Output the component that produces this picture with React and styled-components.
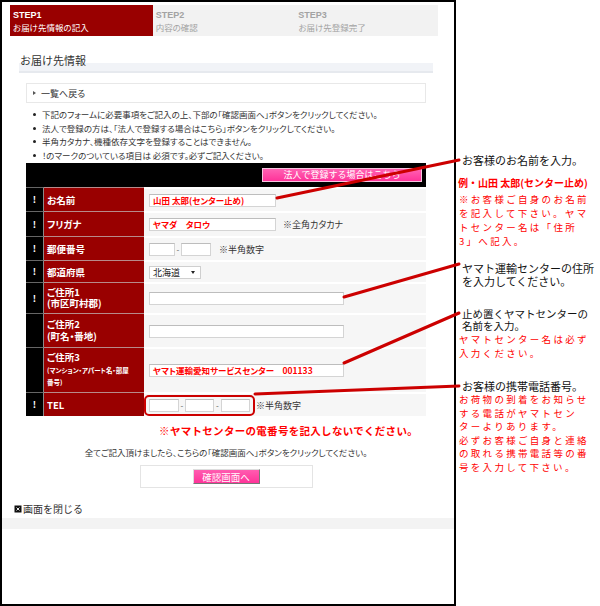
import React from 'react';
import styled, { createGlobalStyle } from 'styled-components';

const GlobalStyle = createGlobalStyle`
  html, body {
    margin: 0;
    padding: 0;
    background: #fff;
  }
  body {
    font-family: "Noto Sans CJK JP", "Liberation Sans", sans-serif;
    font-size: 8.5px;
    color: #222;
    font-feature-settings: "palt";
  }
  * {
    box-sizing: border-box;
  }
`;

const Page = styled.div`
  position: relative;
  display: flex;
  align-items: flex-start;
  width: 600px;
  height: 606px;
  overflow: hidden;
`;

const Frame = styled.div`
  width: 456px;
  height: 606px;
  border: 2px solid #000;
  padding-top: 3px;
  display: flex;
  flex-direction: column;
`;

const Steps = styled.ol`
  display: flex;
  list-style: none;
  margin: 0 16px 0 8px;
  padding: 0;
  height: 31px;
`;

const Step = styled.li`
  flex: 1;
  padding: 4px 0 0 3px;
  background: ${(p) => (p.$active ? '#990000' : '#f2f2f2')};
  color: ${(p) => (p.$active ? '#fff' : '#a3a3a3')};
  line-height: 12px;

  & b {
    display: block;
    font-family: "Liberation Sans", sans-serif;
    font-size: 9px;
  }
  & span {
    display: block;
    font-size: 8.5px;
  }
`;

const SectionTitle = styled.h2`
  margin: 11px 21px 0 17px;
  height: 26px;
  padding: 6px 0 0 1px;
  font-size: 11px;
  font-weight: normal;
  line-height: 14px;
  color: #333;
  font-feature-settings: normal;
  background: linear-gradient(#fff 0 16px, #f1f3f7 16px);
  border-bottom: 2px solid #e6e9ee;
`;

const BackBox = styled.div`
  margin: 10px 28px 0 24px;
  height: 20px;
  border: 1px solid #e8e8e8;
  display: flex;
  align-items: center;
  gap: 5px;
  padding-left: 6px;
  font-size: 9px;
  color: #333;
`;

const Arrow = styled.i`
  width: 0;
  height: 0;
  border-left: 3px solid #555;
  border-top: 2px solid transparent;
  border-bottom: 2px solid transparent;
`;

const Notes = styled.ul`
  margin: 5px 0 0 31px;
  padding: 0;
  list-style: none;
`;

const NoteItem = styled.li`
  display: flex;
  align-items: center;
  gap: 6px;
  line-height: 13.5px;
  color: #333;

  &::before {
    content: "";
    width: 3px;
    height: 3px;
    border-radius: 50%;
    background: #222;
  }
`;

const FormTable = styled.div`
  margin: 1px 28px 0 24px;
`;

const TableHead = styled.div`
  height: 24px;
  background: #000;
  display: flex;
  justify-content: flex-end;
  align-items: center;
  padding-right: 4px;
`;

const CorpButton = styled.button`
  width: 160px;
  height: 14px;
  padding: 0;
  border: 1px solid #f6c6e0;
  background: linear-gradient(#ff62b3, #ff3399);
  color: #fff;
  font-family: inherit;
  font-size: 9px;
  line-height: 12px;
`;

const Row = styled.div`
  display: grid;
  grid-template-columns: 18px 100px 1fr;
  height: ${(p) => p.$h}px;
`;

const Mark = styled.div`
  background: #000;
  border-right: 1px solid #8a8a8a;
  border-top: 1px solid #666;
  color: #fff;
  font-weight: bold;
  font-size: 9px;
  display: flex;
  align-items: center;
  justify-content: center;
`;

const Label = styled.div`
  background: #990000;
  border-top: 1px solid #b88a8a;
  color: #fff;
  font-weight: bold;
  font-size: 9.5px;
  line-height: ${(p) => p.$lh || 12}px;
  padding-left: 3px;
  display: flex;
  flex-direction: column;
  justify-content: center;
  white-space: nowrap;
`;

const SubLabel = styled.span`
  font-size: 6.5px;
`;

const Field = styled.div`
  background: #f6f6f6;
  border-top: 2px solid #fff;
  display: flex;
  align-items: center;
  padding-left: ${(p) => (p.$flush ? 0 : 5)}px;
  color: #333;
  font-size: 9px;
`;

/* read-only value boxes, drawn as plain boxes so the text sits inside cleanly */
const TextBox = styled.span`
  display: block;
  width: ${(p) => p.$w}px;
  height: 13px;
  border: 1px solid #d4d4d4;
  border-top-color: #bdbdbd;
  background: #fff;
  padding: 0 3px;
  overflow: hidden;
  white-space: nowrap;
  font-size: 8.5px;
  font-weight: bold;
  line-height: 11px;
  color: #f00;
`;

const Dash = styled.span`
  width: ${(p) => p.$w || 6}px;
  text-align: center;
  color: #555;
  font-size: 8px;
`;

const Hint = styled.span`
  margin-left: ${(p) => p.$gap}px;
  font-size: 9px;
  color: #333;
`;

const SelectBox = styled.div`
  width: 52px;
  height: 13px;
  border: 1px solid #cfcfcf;
  background: #fff;
  display: flex;
  align-items: center;
  justify-content: space-between;
  padding: 0 5px 0 3px;
  font-size: 9px;
  color: #222;

  &::after {
    content: "";
    border-top: 3px solid #222;
    border-left: 2.5px solid transparent;
    border-right: 2.5px solid transparent;
  }
`;

const TelBox = styled.div`
  display: flex;
  align-items: center;
  height: 21px;
  padding-left: 3px;
  padding-right: 3px;
  border: 2px solid #cc0000;
  border-radius: 5px;
`;

const Warning = styled.p`
  margin: 8px 36px 0 0;
  text-align: right;
  color: #f00;
  font-weight: bold;
  font-size: 10.5px;
  line-height: 14px;
  letter-spacing: 0.3px;
  font-feature-settings: normal;
`;

const Instruction = styled.p`
  margin: 7px 28px 0 24px;
  text-align: center;
  line-height: 14px;
  color: #333;
`;

const ConfirmBox = styled.div`
  align-self: center;
  width: 173px;
  height: 23px;
  margin: 6px 0 0 -4px;
  border: 1px solid #e4e4e4;
  display: flex;
  align-items: center;
  justify-content: center;
`;

const ConfirmButton = styled.button`
  width: 67px;
  height: 15px;
  padding: 0;
  border: 1px solid;
  border-color: #ddd #777 #777 #ddd;
  background: linear-gradient(#ff5cb0, #ff3399);
  color: #fff;
  font-family: inherit;
  font-size: 9.5px;
  line-height: 12px;
`;

const CloseLink = styled.div`
  margin-top: 14px;
  padding-left: 12px;
  display: flex;
  align-items: center;
  gap: 1px;
  line-height: 14px;
  font-size: 10px;
  color: #333;
  font-feature-settings: normal;
`;

const FooterBar = styled.div`
  margin-top: 2px;
  height: 11px;
  background: #f3f3f3;
`;

const Callouts = styled.aside`
  flex: 1;
  padding-left: 2px;
  display: flex;
  flex-direction: column;
  font-feature-settings: normal;
`;

const CalloutTitle = styled.div`
  margin-top: ${(p) => p.$top}px;
  padding-left: 4px;
  font-size: ${(p) => p.$size || 11}px;
  line-height: ${(p) => p.$lh || 13}px;
  color: #111;
  white-space: nowrap;
`;

const Example = styled.div`
  margin-top: 9px;
  font-size: 10px;
  font-weight: bold;
  line-height: 13px;
  color: #f00;
  white-space: nowrap;
`;

const RedText = styled.div`
  margin-top: ${(p) => p.$top || 0}px;
  padding-left: 1px;
  font-size: 9.5px;
  letter-spacing: 2.3px;
  line-height: ${(p) => p.$lh || 14}px;
  color: #f00;
  white-space: nowrap;
`;

const Leaders = styled.svg`
  position: absolute;
  left: 0;
  top: 0;
  pointer-events: none;
`;

const leaders = [
  [277, 198, 459, 160],
  [344, 297, 459, 264],
  [344, 363, 459, 313],
  [255, 394, 459, 386],
];

const CloseIcon = () => (
  <svg width="8" height="8" viewBox="0 0 8 8">
    <rect x="0.5" y="0.5" width="7" height="7" fill="#111" />
    <path d="M2.5 2.5 L5.5 5.5 M5.5 2.5 L2.5 5.5" stroke="#fff" strokeWidth="0.9" />
  </svg>
);

const App = () => {
  return (
    <Page>
      <GlobalStyle />
      <Frame>
        <Steps>
          <Step $active>
            <b>STEP1</b>
            <span>お届け先情報の記入</span>
          </Step>
          <Step>
            <b>STEP2</b>
            <span>内容の確認</span>
          </Step>
          <Step>
            <b>STEP3</b>
            <span>お届け先登録完了</span>
          </Step>
        </Steps>

        <SectionTitle>お届け先情報</SectionTitle>

        <BackBox>
          <Arrow />
          一覧へ戻る
        </BackBox>

        <Notes>
          <NoteItem>下記のフォームに必要事項をご記入の上、下部の「確認画面へ」ボタンをクリックしてください。</NoteItem>
          <NoteItem>法人で登録の方は、「法人で登録する場合はこちら」ボタンをクリックしてください。</NoteItem>
          <NoteItem>半角カタカナ、機種依存文字を登録することはできません。</NoteItem>
          <NoteItem>！のマークのついている項目は 必須です。必ずご記入ください。</NoteItem>
        </Notes>

        <FormTable>
          <TableHead>
            <CorpButton type="button">法人で登録する場合はこちら</CorpButton>
          </TableHead>

          <Row $h={24}>
            <Mark>!</Mark>
            <Label>お名前</Label>
            <Field>
              <TextBox $w={127}>山田 太郎(センター止め)</TextBox>
            </Field>
          </Row>

          <Row $h={25}>
            <Mark>!</Mark>
            <Label>フリガナ</Label>
            <Field>
              <TextBox $w={127}>ヤマダ　タロウ</TextBox>
              <Hint $gap={7}>※全角カタカナ</Hint>
            </Field>
          </Row>

          <Row $h={24}>
            <Mark>!</Mark>
            <Label>郵便番号</Label>
            <Field>
              <TextBox $w={26} />
              <Dash>-</Dash>
              <TextBox $w={30} />
              <Hint $gap={8}>※半角数字</Hint>
            </Field>
          </Row>

          <Row $h={22}>
            <Mark>!</Mark>
            <Label>都道府県</Label>
            <Field>
              <SelectBox>北海道</SelectBox>
            </Field>
          </Row>

          <Row $h={31}>
            <Mark>!</Mark>
            <Label $lh={11.5}>
              <span>ご住所1</span>
              <span>(市区町村郡)</span>
            </Label>
            <Field>
              <TextBox $w={195} />
            </Field>
          </Row>

          <Row $h={34}>
            <Mark />
            <Label $lh={11.5}>
              <span>ご住所2</span>
              <span>(町名・番地)</span>
            </Label>
            <Field>
              <TextBox $w={195} />
            </Field>
          </Row>

          <Row $h={45}>
            <Mark />
            <Label $lh={12.5}>
              <span>ご住所3</span>
              <SubLabel>(マンション・アパート名・部屋</SubLabel>
              <SubLabel>番号)</SubLabel>
            </Label>
            <Field>
              <TextBox $w={195}>ヤマト運輸愛知サービスセンター　001133</TextBox>
            </Field>
          </Row>

          <Row $h={24}>
            <Mark>!</Mark>
            <Label>TEL</Label>
            <Field $flush>
              <TelBox>
                <TextBox $w={30} />
                <Dash>-</Dash>
                <TextBox $w={29} />
                <Dash $w={7}>-</Dash>
                <TextBox $w={29} />
              </TelBox>
              <Hint $gap={1}>※半角数字</Hint>
            </Field>
          </Row>
        </FormTable>

        <Warning>※ヤマトセンターの電番号を記入しないでください。</Warning>
        <Instruction>全てご記入頂けましたら、こちらの「確認画面へ」ボタンをクリックしてください。</Instruction>

        <ConfirmBox>
          <ConfirmButton type="button">確認画面へ</ConfirmButton>
        </ConfirmBox>

        <CloseLink>
          <CloseIcon />
          画面を閉じる
        </CloseLink>
        <FooterBar />
      </Frame>

      <Callouts>
        <CalloutTitle $top={154}>お客様のお名前を入力。</CalloutTitle>
        <Example>例・山田 太郎(センター止め)</Example>
        <RedText $top={3}>
          ※お客様ご自身のお名前
          <br />
          を記入して下さい。ヤマ
          <br />
          トセンター名は「住所
          <br />
          3」へ記入。
        </RedText>

        <CalloutTitle $top={14} $lh={12.5}>
          ヤマト運輸センターの住所
          <br />
          を入力してください。
        </CalloutTitle>

        <CalloutTitle $top={21} $lh={12} $size={10.5}>
          止め置くヤマトセンターの
          <br />
          名前を入力。
        </CalloutTitle>
        <RedText>
          ヤマトセンター名は必ず
          <br />
          入力ください。
        </RedText>

        <CalloutTitle $top={20}>お客様の携帯電話番号。</CalloutTitle>
        <RedText $lh={13.6}>
          お荷物の到着をお知らせ
          <br />
          する電話がヤマトセン
          <br />
          ターよりあります。
          <br />
          必ずお客様ご自身と連絡
          <br />
          の取れる携帯電話等の番
          <br />
          号を入力して下さい。
        </RedText>
      </Callouts>

      <Leaders width="600" height="606" viewBox="0 0 600 606">
        {leaders.map(([x1, y1, x2, y2], i) => (
          <line
            key={i}
            x1={x1}
            y1={y1}
            x2={x2}
            y2={y2}
            stroke="#cc0000"
            strokeWidth="3"
            strokeLinecap="round"
          />
        ))}
      </Leaders>
    </Page>
  );
};

export default App;
